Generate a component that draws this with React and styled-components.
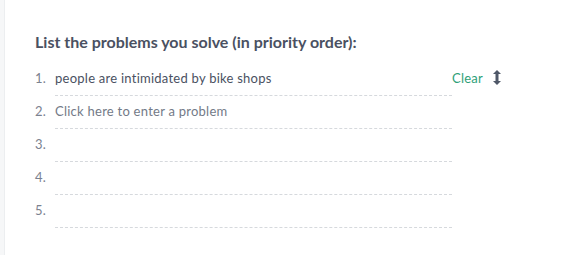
import React from "react";
import styled, { createGlobalStyle } from "styled-components";

const GlobalStyle = createGlobalStyle`
  html, body {
    margin: 0;
    padding: 0;
    background: #ffffff;
  }
  body {
    font-family: "Lato", "Open Sans", sans-serif;
  }
`;

const Page = styled.div`
  display: flex;
  width: 561px;
  height: 255px;
  background: #ffffff;
`;

const Rail = styled.div`
  width: 4px;
  background: #f6f7f8;
  border-right: 1px solid #eceef0;
`;

const Content = styled.section`
  padding: 32px 0 0 30px;
`;

const Heading = styled.h2`
  margin: 0 0 11px;
  font-size: 16px;
  line-height: 20px;
  font-weight: 700;
  color: #4a5162;
`;

const List = styled.ol`
  list-style: none;
  margin: 0;
  padding: 0;
`;

const Row = styled.li`
  display: flex;
  align-items: flex-start;
  height: 33px;
`;

const Number = styled.span`
  width: 20px;
  padding-top: 6px;
  font-size: 13px;
  line-height: 18px;
  letter-spacing: 0.25px;
  color: #7b8290;
`;

const Field = styled.div`
  width: 397px;
  padding: 6px 0 8px;
  font-size: 13px;
  line-height: 18px;
  letter-spacing: 0.25px;
  color: ${(p) => (p.$placeholder ? "#737a87" : "#4a5162")};
  border-bottom: 1px dashed #d6d9dd;
  height: 18px;
`;

const Actions = styled.div`
  display: flex;
  align-items: center;
  gap: 10px;
  padding-top: 6px;
  height: 18px;
`;

const ClearLink = styled.a`
  font-size: 13px;
  line-height: 18px;
  letter-spacing: 0.25px;
  color: #2e9f78;
  cursor: pointer;
`;

const Handle = styled.svg`
  display: block;
  width: 8px;
  height: 15px;
  margin-top: -2px;
`;

const problems = ["people are intimidated by bike shops", "", "", "", ""];

export default function App() {
  return (
    <>
      <GlobalStyle />
      <Page>
        <Rail />
        <Content>
          <Heading>List the problems you solve (in priority order):</Heading>
          <List>
            {problems.map((text, i) => (
              <Row key={i}>
                <Number>{i + 1}.</Number>
                <Field $placeholder={!text}>
                  {text || (i === 1 ? "Click here to enter a problem" : "")}
                </Field>
                {text && (
                  <Actions>
                    <ClearLink>Clear</ClearLink>
                    <Handle viewBox="0 0 8 15">
                      <path
                        d="M4 0 L8 4 L5.5 4 L5.5 11 L8 11 L4 15 L0 11 L2.5 11 L2.5 4 L0 4 Z"
                        fill="#4f5868"
                      />
                    </Handle>
                  </Actions>
                )}
              </Row>
            ))}
          </List>
        </Content>
      </Page>
    </>
  );
}
